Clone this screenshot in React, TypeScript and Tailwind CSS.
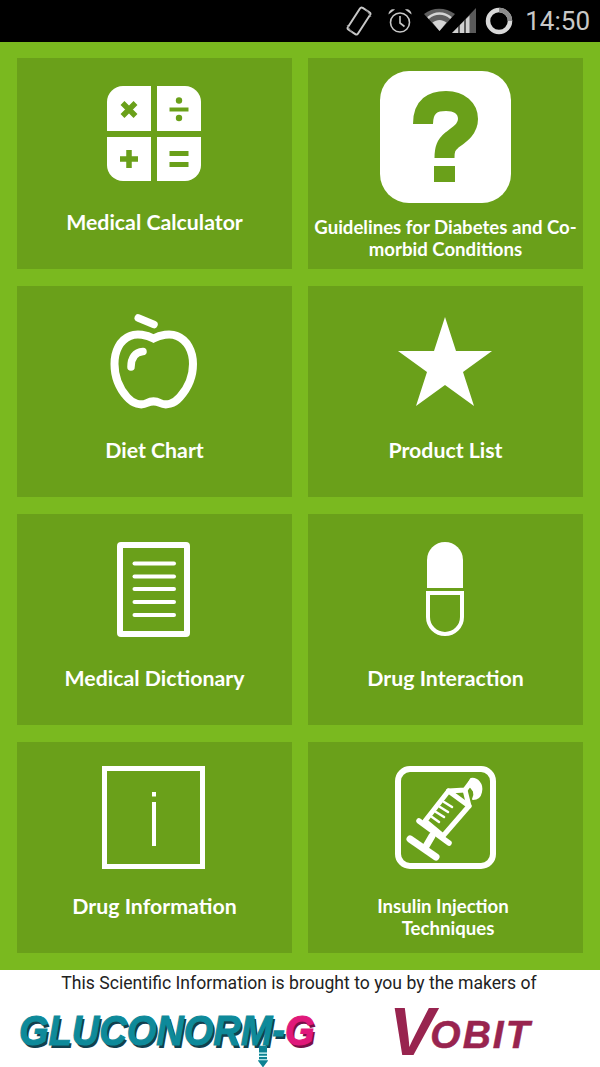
import type { ReactNode } from "react";

const PhoneRotateIcon = () => (
  <svg width="28" height="30" viewBox="0 0 28 30" fill="none" stroke="#c8c8c8" className="mr-[14px]">
    <rect x="8" y="2" width="12" height="26" rx="2" strokeWidth="2" transform="rotate(33 14 15)" />
    <path d="M2 19 L7 27" strokeWidth="1" stroke="#8a8a8a" />
    <path d="M26 11 L21 3" strokeWidth="1" stroke="#8a8a8a" />
  </svg>
);

const AlarmIcon = () => (
  <svg width="26" height="28" viewBox="0 0 26 28" fill="none" stroke="#c8c8c8" strokeWidth="1.6" className="mr-[10px]">
    <circle cx="13" cy="15.5" r="9.5" />
    <path d="M13 9 V16 L17.5 19.5" />
    <path d="M1.5 7.5 C1.5 3.5 5 1.5 8 2.5 Z" fill="#c8c8c8" stroke="none" />
    <path d="M24.5 7.5 C24.5 3.5 21 1.5 18 2.5 Z" fill="#c8c8c8" stroke="none" />
  </svg>
);

const WifiSignalIcon = () => (
  <svg width="54" height="26" viewBox="0 0 54 26" className="mr-[8px]">
    <path d="M1 6 C10 -1 22 -1 32 6 L16.5 23 Z" fill="#5e5e5e" />
    <path d="M5 10 C12 4 21 4 28 10" fill="none" stroke="#d4d4d4" strokeWidth="2.5" />
    <path d="M9.5 14.5 C14 11 19 11 23.5 14.5 L16.5 23 Z" fill="#d4d4d4" />
    <path d="M29 25 L53 0 V25 Z" fill="#5a5a5a" />
    <path d="M29 25 L35 19 V25 Z M37 25 V17 L41 13 V25 Z M43 25 V11 L46.5 7.5 V25 Z" fill="#d0d0d0" />
  </svg>
);

const BatteryRing = () => (
  <svg width="28" height="28" viewBox="0 0 28 28" fill="none" strokeWidth="4.5" className="mr-[12px]">
    <circle cx="14" cy="14" r="11" stroke="#d8d8d8" />
    <path d="M14 3 A11 11 0 0 1 25 14" stroke="#8c8c8c" />
  </svg>
);

const CalculatorIcon = () => (
  <svg width="94" height="95" viewBox="0 0 94 95">
    <path d="M44 0 V45 H0 V16 A16 16 0 0 1 16 0 Z" fill="#fff" />
    <path d="M50 0 H78 A16 16 0 0 1 94 16 V45 H50 Z" fill="#fff" />
    <path d="M0 51 H44 V95 H16 A16 16 0 0 1 0 79 Z" fill="#fff" />
    <path d="M50 51 H94 V79 A16 16 0 0 1 78 95 H50 Z" fill="#fff" />
    <g stroke="#6aa01a" strokeWidth="5.5" fill="none">
      <path d="M15.5 17 L28.5 30 M28.5 17 L15.5 30" />
      <path d="M62.5 23.5 H81.5" strokeWidth="4" />
      <path d="M22 64 V82 M13 73 H31" />
      <path d="M62.5 67.5 H81.5 M62.5 78.5 H81.5" strokeWidth="5" />
    </g>
    <circle cx="72" cy="14.5" r="3.2" fill="#6aa01a" />
    <circle cx="72" cy="32" r="3.2" fill="#6aa01a" />
  </svg>
);

const QuestionIcon = () => (
  <svg width="131" height="132" viewBox="0 0 131 132">
    <rect width="131" height="132" rx="29" fill="#fff" />
    <path
      d="M43 53 C43 35 53 30 66 30 C80 30 88 38 88 48 C88 58 80 63 72 69 C66 74 64.5 78 64.5 87"
      fill="none"
      stroke="#6aa01a"
      strokeWidth="20"
    />
    <rect x="54" y="95" width="21" height="16" fill="#6aa01a" />
  </svg>
);

const AppleIcon = () => (
  <svg width="88" height="96" viewBox="0 0 88 96" fill="none" stroke="#fff" strokeLinecap="round">
    <path d="M28.3 4 L44 10.5" strokeWidth="7.5" />
    <path
      d="M43.5 24.5 C50 21 60 19 67 22 C77 26 83 37 83 50 C83 62 78 74 70 83 C64 90 56 92 50 89 C46 87 41 87 37 89 C31 92 23 90 17 83 C9 74 4.5 62 4.5 50 C4.5 37 10 26 20 22 C27 19 37 21 43.5 24.5 Z"
      strokeWidth="8"
    />
    <path d="M33 37.5 C25 38 21 44 21 53" strokeWidth="7.5" />
  </svg>
);

const StarIcon = () => (
  <svg width="94" height="89" viewBox="0 0 94 89">
    <polygon points="47,0 58,34 94,34 65,55 76,89 47,68 18,89 29,55 0,34 36,34" fill="#fff" />
  </svg>
);

const DocumentIcon = () => (
  <svg width="73" height="95" viewBox="0 0 73 95" fill="none" stroke="#fff">
    <rect x="3" y="3" width="67" height="89" rx="1" strokeWidth="6" />
    <g strokeWidth="4" strokeLinecap="round">
      <path d="M17.5 21.5 H57" />
      <path d="M17.5 34.5 H57" />
      <path d="M17.5 47 H57" />
      <path d="M17.5 60 H57" />
      <path d="M17.5 73 H57" />
    </g>
  </svg>
);

const PillIcon = () => (
  <svg width="38" height="95" viewBox="0 0 38 95" fill="none">
    <path d="M1 46 V18 A18 18 0 0 1 37 18 V46 Z" fill="#fff" />
    <path d="M2 51 H36 V75 A17 17 0 0 1 2 75 Z" stroke="#fff" strokeWidth="4" />
  </svg>
);

const InfoIcon = () => (
  <svg width="103" height="103" viewBox="0 0 103 103" fill="none" stroke="#fff">
    <rect x="2.5" y="2.5" width="98" height="98" strokeWidth="5" />
    <path d="M52 26 V30.5" strokeWidth="4" />
    <path d="M52 36 V80" strokeWidth="4" />
  </svg>
);

const SyringeIcon = () => (
  <svg width="101" height="103" viewBox="0 0 101 103" fill="none" stroke="#fff" strokeLinecap="round" strokeLinejoin="round">
    <rect x="3" y="3" width="95" height="97" rx="12" strokeWidth="6" />
    <path d="M15 73 L41 91" strokeWidth="7" />
    <path d="M30 82 L37 70" strokeWidth="7" />
    <path d="M24 55 L54 77" strokeWidth="5.5" />
    <path d="M53.5 25 L74 40 L48 70 L30 55 Z" strokeWidth="5" />
    <path d="M53.5 25 L70 24 L76 16" strokeWidth="5" />
    <path d="M74 40 L70 24" strokeWidth="5" />
    <path d="M76 13 C82 12 88 18 86 26 C85 31 82 33 78 33 C81 28 79 22 73 19 Z" fill="#fff" strokeWidth="2" />
    <g strokeWidth="2.5">
      <path d="M49 36 L57 41" />
      <path d="M45 41 L53 46" />
      <path d="M41 46 L49 51" />
      <path d="M37 51 L44 56" />
    </g>
  </svg>
);

const ScrewTail = () => (
  <svg width="12" height="20" viewBox="0 0 12 20" className="absolute left-[238px] top-[34px]">
    <path d="M2 0 H10 V13 L11 14 L6 20 L1 14 L2 13 Z" fill="#0e8393" />
    <path d="M2 7 H10 M2 10 H10 M2 13 H10" stroke="#dff" strokeWidth="1" />
  </svg>
);

type TileProps = {
  icon: ReactNode;
  labelClass?: string;
  iconOffset?: string;
  children: ReactNode;
};

function Tile({ icon, labelClass, iconOffset, children }: TileProps) {
  return (
    <div className="h-[211px] flex flex-col items-center bg-[#6aa01a]">
      <div className={`h-[151px] flex items-center justify-center shrink-0 ${iconOffset ?? ""}`}>{icon}</div>
      <div className={`text-center text-white font-bold ${labelClass ?? "mt-[2px] text-[21.3px] leading-[22px]"}`}>
        {children}
      </div>
    </div>
  );
}

export default function App() {
  return (
    <div className="w-[600px] h-[1067px] flex flex-col bg-white font-['Lato',sans-serif]">
      <div className="h-[42px] flex items-center justify-end bg-black">
        <PhoneRotateIcon />
        <AlarmIcon />
        <WifiSignalIcon />
        <BatteryRing />
        <span className="mr-[10px] font-['Roboto',sans-serif] text-[26px] text-[#c8c8c8]">14:50</span>
      </div>

      <div className="h-[928px] bg-[#7ab91f] px-[17px] pt-[16px] grid grid-cols-2 gap-x-[16px] gap-y-[17px] content-start">
        <Tile icon={<CalculatorIcon />} iconOffset="pr-[1px]">
          Medical Calculator
        </Tile>
        <Tile
          icon={<QuestionIcon />}
          iconOffset="pt-[7px]"
          labelClass="mt-[7px] text-[18.6px] leading-[22px]"
        >
          Guidelines for Diabetes and Co-morbid Conditions
        </Tile>
        <Tile icon={<AppleIcon />} iconOffset="pr-[1px]">
          Diet Chart
        </Tile>
        <Tile icon={<StarIcon />} iconOffset="pr-[1px]">
          Product List
        </Tile>
        <Tile icon={<DocumentIcon />} iconOffset="pr-[2px]">
          Medical Dictionary
        </Tile>
        <Tile icon={<PillIcon />} iconOffset="pr-[1px]">
          Drug Interaction
        </Tile>
        <Tile icon={<InfoIcon />} iconOffset="pr-[2px]">
          Drug Information
        </Tile>
        <Tile icon={<SyringeIcon />} labelClass="mt-[2px] text-[18.6px] leading-[22px]">
          <div className="pr-[5px]">Insulin Injection</div>
          <div className="pl-[5px]">Techniques</div>
        </Tile>
      </div>

      <div className="flex-1 flex flex-col">
        <div className="pr-[2px] text-center font-['Roboto',sans-serif] text-[17.6px] leading-[26px] text-[#222]">
          This Scientific Information is brought to you by the makers of
        </div>
        <div className="flex items-start mt-[6px] pl-[19px]">
          <div className="relative mt-[6px] w-[299px] h-[42px] origin-top scale-y-[1.1] font-['Liberation_Sans',sans-serif] font-bold italic text-[38px] leading-[42px] whitespace-nowrap text-[#0e8a9a] [-webkit-text-stroke:1px_#0e8a9a] [text-shadow:2px_2px_0_#12404e]">
            GLUCONORM
            <span>-</span>
            <span className="text-[#e0187a] [-webkit-text-stroke:1px_#e0187a] [text-shadow:2px_2px_0_#7a0f48]">G</span>
            <ScrewTail />
          </div>
          <div className="ml-[71px] flex items-start font-['Liberation_Sans',sans-serif] font-bold italic text-[#98244f]">
            <span className="text-[68px] leading-[58px]">V</span>
            <span className="-ml-[4px] mt-[11px] text-[39px] leading-[44px] tracking-[2px] [-webkit-text-stroke:0.5px_#98244f]">
              OBIT
            </span>
          </div>
        </div>
      </div>
    </div>
  );
}
